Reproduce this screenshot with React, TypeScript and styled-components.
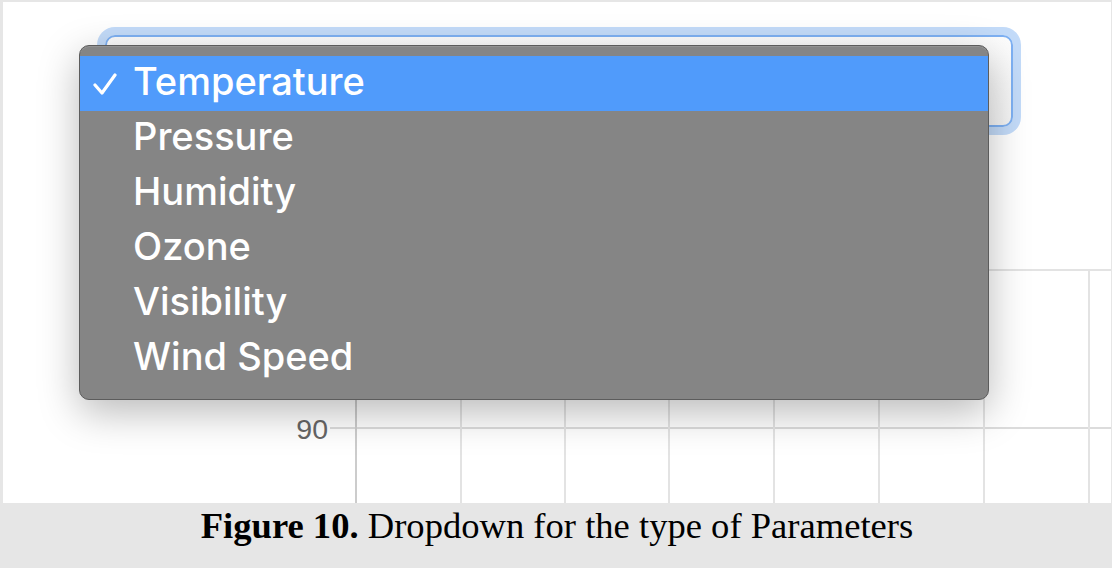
import React from "react";
import styled, { createGlobalStyle } from "styled-components";

const Global = createGlobalStyle`
  html, body { margin: 0; padding: 0; }
  body { background: #e6e6e6; width: 1112px; height: 568px; overflow: hidden; }
`;

const Page = styled.div`
  width: 1112px;
  height: 568px;
  background: #e6e6e6;
  padding: 2px 1px 0 3px;
  box-sizing: border-box;
  display: flex;
  flex-direction: column;
`;

const Frame = styled.div`
  position: relative;
  height: 501px;
  background: #ffffff;
  display: flex;
  flex-direction: column;
  overflow: hidden;
`;

const SelectBox = styled.div`
  margin: 33px 0 0 102px;
  width: 908px;
  height: 92px;
  box-sizing: border-box;
  border: 2px solid #7eb1f3;
  border-radius: 10px;
  background: linear-gradient(#fdfdfd, #f4f4f4);
  box-shadow: 0 0 0 8px #c3dbf9;
`;

const Chart = styled.svg`
  display: block;
  margin-top: 123px;
  flex: 1;
  width: 1108px;
`;

const Menu = styled.ul`
  position: absolute;
  left: 76px;
  top: 43px;
  width: 910px;
  height: 355px;
  margin: 0;
  padding: 10px 0 0;
  box-sizing: border-box;
  list-style: none;
  background: #858585;
  border: 1px solid #5c5c5c;
  border-radius: 10px;
  box-shadow: inset 0 1px 0 rgba(255, 255, 255, 0.12), 0 12px 40px rgba(0, 0, 0, 0.28);
  overflow: hidden;
`;

const Item = styled.li<{ $selected?: boolean }>`
  position: relative;
  height: 55px;
  box-sizing: border-box;
  padding: 0 0 6px 53px;
  display: flex;
  align-items: center;
  background: ${(p) => (p.$selected ? "#509bfb" : "transparent")};
  color: #ffffff;
  font-family: Inter, "Liberation Sans", sans-serif;
  font-weight: 500;
  font-size: 38px;
  line-height: 1;
`;

const Check = styled.svg`
  position: absolute;
  left: 13px;
  top: 16px;
  width: 24px;
  height: 24px;
`;

const Caption = styled.div`
  flex: 1;
  text-align: center;
  font-family: "Liberation Serif", "Times New Roman", serif;
  font-size: 36.6px;
  line-height: 37px;
  padding-top: 4px;
  color: #000;
  b { font-weight: bold; }
`;

const items = ["Temperature", "Pressure", "Humidity", "Ozone", "Visibility", "Wind Speed"];
const vLines = [458, 562, 666, 771, 876, 981, 1086];

export default function App() {
  return (
    <>
      <Global />
      <Page>
        <Frame>
          <SelectBox />
          <Chart viewBox="0 0 1108 253">
            <line x1={327} y1={20} x2={1108} y2={20} stroke="#e3e3e3" strokeWidth={2} />
            <line x1={327} y1={178} x2={1108} y2={178} stroke="#dcdcdc" strokeWidth={2} />
            {vLines.map((x) => (
              <line key={x} x1={x} y1={20} x2={x} y2={253} stroke="#e3e3e3" strokeWidth={2} />
            ))}
            <line x1={353} y1={20} x2={353} y2={253} stroke="#cccccc" strokeWidth={2} />
            <text
              x={325}
              y={189}
              textAnchor="end"
              fontFamily="'Liberation Sans', Arial, sans-serif"
              fontSize={28.5}
              fill="#666666"
            >
              90
            </text>
          </Chart>
          <Menu>
            {items.map((t, i) => (
              <Item key={t} $selected={i === 0}>
                {i === 0 && (
                  <Check viewBox="0 0 24 24">
                    <polyline
                      points="2,13 9,21 22,3"
                      fill="none"
                      stroke="#fff"
                      strokeWidth={3.2}
                      strokeLinecap="round"
                      strokeLinejoin="round"
                    />
                  </Check>
                )}
                {t}
              </Item>
            ))}
          </Menu>
        </Frame>
        <Caption>
          <b>Figure 10.</b> Dropdown for the type of Parameters
        </Caption>
      </Page>
    </>
  );
}
